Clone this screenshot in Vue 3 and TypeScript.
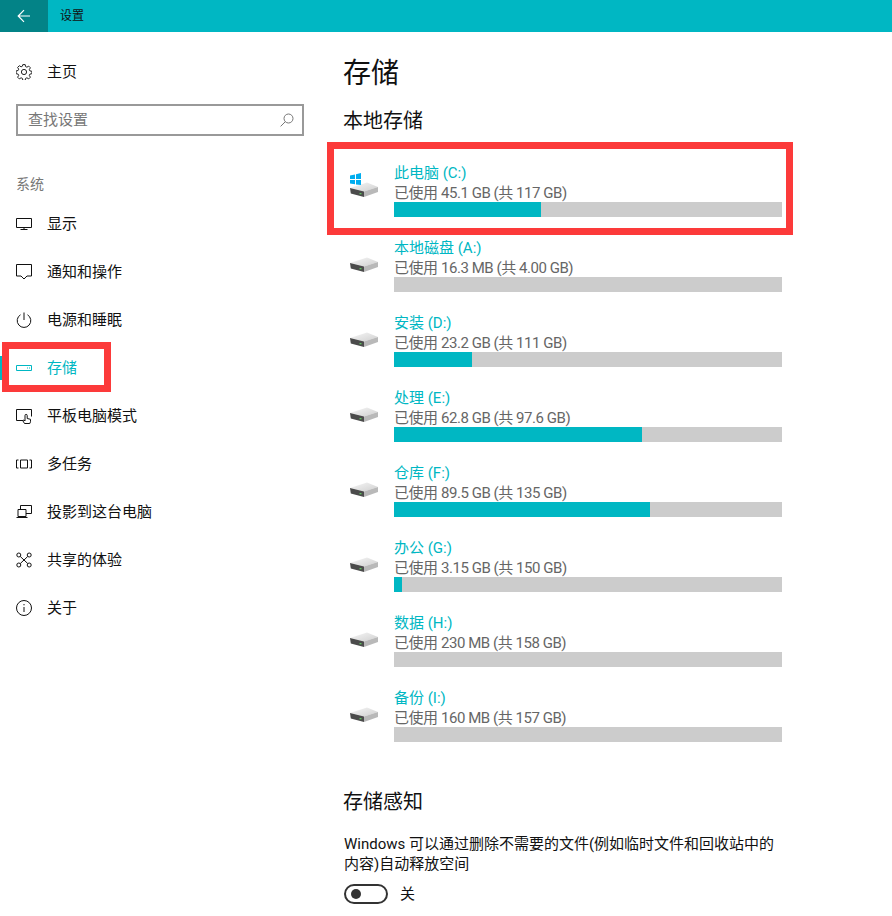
<script setup lang="ts">
interface NavItem {
  key: string
  label: string
  active?: boolean
}

interface Drive {
  name: string
  used: string
  fill: number
  system?: boolean
}

const navItems: NavItem[] = [
  { key: 'display', label: '显示' },
  { key: 'notify', label: '通知和操作' },
  { key: 'power', label: '电源和睡眠' },
  { key: 'storage', label: '存储', active: true },
  { key: 'tablet', label: '平板电脑模式' },
  { key: 'multitask', label: '多任务' },
  { key: 'project', label: '投影到这台电脑' },
  { key: 'share', label: '共享的体验' },
  { key: 'about', label: '关于' },
]

const drives: Drive[] = [
  { name: '此电脑 (C:)', used: '已使用 45.1 GB (共 117 GB)', fill: 147, system: true },
  { name: '本地磁盘 (A:)', used: '已使用 16.3 MB (共 4.00 GB)', fill: 0 },
  { name: '安装 (D:)', used: '已使用 23.2 GB (共 111 GB)', fill: 78 },
  { name: '处理 (E:)', used: '已使用 62.8 GB (共 97.6 GB)', fill: 248 },
  { name: '仓库 (F:)', used: '已使用 89.5 GB (共 135 GB)', fill: 256 },
  { name: '办公 (G:)', used: '已使用 3.15 GB (共 150 GB)', fill: 8 },
  { name: '数据 (H:)', used: '已使用 230 MB (共 158 GB)', fill: 0 },
  { name: '备份 (I:)', used: '已使用 160 MB (共 157 GB)', fill: 0 },
]
</script>

<template>
  <div class="app">
    <header class="topbar">
      <div class="back">
        <svg width="14" height="14" viewBox="0 0 14 14" fill="none" stroke="#fff" stroke-width="1.2">
          <path d="M13 7H1.5M7 1.2 1.2 7 7 12.8" />
        </svg>
      </div>
      <span class="app-title">设置</span>
    </header>

    <div class="body">
      <aside class="sidebar">
        <div class="nav-row home">
          <svg class="nav-icon" viewBox="0 0 16 16" fill="none" stroke="#222" stroke-width="1">
            <circle cx="8" cy="8" r="2.6" />
            <path d="M6.8.6h2.4l.4 2 1.3.6 1.8-1.1 1.7 1.7-1.1 1.8.6 1.3 2 .4v2.4l-2 .4-.6 1.3 1.1 1.8-1.7 1.7-1.8-1.1-1.3.6-.4 2H6.8l-.4-2-1.3-.6-1.8 1.1-1.7-1.7 1.1-1.8-.6-1.3-2-.4V6.900l2-.4.6-1.300-1.100-1.800 1.700-1.700 1.800 1.100 1.300-.6z" />
          </svg>
          <span>主页</span>
        </div>

        <div class="search">
          <span class="placeholder">查找设置</span>
          <svg width="14" height="14" viewBox="0 0 14 14" fill="none" stroke="#777" stroke-width="1">
            <circle cx="8.500" cy="5.500" r="4.500" />
            <path d="M5.300 8.700.6 13.400" />
          </svg>
        </div>

        <div class="section-label">系统</div>

        <nav class="nav">
          <div v-for="item in navItems" :key="item.key" class="nav-row" :class="{ active: item.active }">
            <svg class="nav-icon" viewBox="0 0 16 16" fill="none" stroke="currentColor" stroke-width="1">
              <template v-if="item.key === 'display'">
                <path d="M.5 2.500h15v9H.5zM8 11.500v2.500M4.500 13.500h7" />
              </template>
              <template v-else-if="item.key === 'notify'">
                <path d="M.5.500h15v11.500h-4.500L8 15l-3-3H.5z" />
              </template>
              <template v-else-if="item.key === 'power'">
                <path d="M8 .5v7.500M4.500 2.800a6.800 6.800 0 1 0 7 0" />
              </template>
              <template v-else-if="item.key === 'storage'">
                <path d="M.5 5.500h15v5H.5z" />
                <path d="M11 8h1M13 8h1" />
              </template>
              <template v-else-if="item.key === 'tablet'">
                <path d="M7 12.500H.5V1.500h15v7" />
                <path d="M8.500 15.500 6.700 12.500l1.300-.5 1 1V7.500a1.100 1.100 0 0 1 2.200 0v3l3.300.8v2.400l-.7 1.800z" />
              </template>
              <template v-else-if="item.key === 'multitask'">
                <path d="M4.500 4h7v8h-7zM2.500 4H.5v8h2M13.500 4h2v8h-2" />
              </template>
              <template v-else-if="item.key === 'project'">
                <path d="M4.500 5V1.500h11v8H10" />
                <path d="M2 5.500h8v7H2zM.5 13.500h11" />
              </template>
              <template v-else-if="item.key === 'share'">
                <circle cx="2.800" cy="3" r="2" />
                <circle cx="13.200" cy="3" r="2" />
                <circle cx="2.800" cy="13" r="2" />
                <circle cx="13.200" cy="13" r="2" />
                <path d="m4.300 4.500 7.400 7M11.700 4.500l-7.400 7" />
              </template>
              <template v-else>
                <circle cx="8" cy="8" r="7.500" />
                <path d="M8 7v5M8 4v1.300" />
              </template>
            </svg>
            <span>{{ item.label }}</span>
            <i v-if="item.active" class="nav-marker"></i>
            <i v-if="item.active" class="mark-box nav-mark"></i>
          </div>
        </nav>
      </aside>

      <main class="main">
        <h1 class="title">存储</h1>
        <h2 class="heading">本地存储</h2>

        <div class="drives">
          <div v-for="drive in drives" :key="drive.name" class="drive">
            <div class="drive-icon">
              <svg width="28" height="25" viewBox="0 0 28 25">
                <defs>
                  <linearGradient id="driveTop" x1="0" y1="0" x2="1" y2="1">
                    <stop offset="0" stop-color="#f7f7f7" />
                    <stop offset="1" stop-color="#cfcfcf" />
                  </linearGradient>
                </defs>
                <path d="M0 16 17 10.500l11 4.500-14 4.500z" fill="url(#driveTop)" />
                <path d="M0 16l14 3.500V25L.8 21.500z" fill="#4b4b4b" />
                <path d="m14 19.500 14-4.500v5L14 25z" fill="#b9b9b9" />
                <path d="M9.500 21h2v1.300h-2z" fill="#5fc25f" />
                <g v-if="drive.system" fill="#00adef">
                  <path d="M0 3.500 5 2.400v4.600H0zM6 2.200 11 1v6H6zM0 8h5v4.300L0 11.500zM6 8h5v5l-5-.6z" />
                </g>
              </svg>
            </div>
            <div class="drive-info">
              <div class="drive-name">{{ drive.name }}</div>
              <div class="drive-used">{{ drive.used }}</div>
              <div class="bar">
                <div class="bar-fill" :style="{ width: drive.fill + 'px' }"></div>
              </div>
            </div>
            <i v-if="drive.system" class="mark-box drive-mark"></i>
          </div>
        </div>

        <h2 class="heading sense">存储感知</h2>
        <p class="desc">Windows 可以通过删除不需要的文件(例如临时文件和回收站中的内容)自动释放空间</p>
        <div class="toggle-row">
          <div class="toggle"><span class="knob"></span></div>
          <span>关</span>
        </div>
      </main>
    </div>
  </div>
</template>

<style scoped>
.app {
  width: 892px;
  height: 916px;
  overflow: hidden;
  background: #fff;
  color: #111;
  font-family: Roboto, "Noto Sans CJK SC", sans-serif;
  font-size: 15px;
  line-height: 20px;
}

.topbar {
  display: flex;
  align-items: center;
  height: 32px;
  background: #00b7c3;
}

.back {
  display: flex;
  align-items: center;
  justify-content: center;
  width: 48px;
  height: 32px;
  background: #038387;
}

.app-title {
  margin-left: 12px;
  font-size: 12px;
}

.body {
  display: flex;
}

.sidebar {
  width: 344px;
  padding: 16px 40px 0 0;
  box-sizing: border-box;
}

.nav-row {
  position: relative;
  display: flex;
  align-items: center;
  gap: 15px;
  height: 48px;
  padding-left: 16px;
}

.nav-icon {
  flex: none;
  width: 16px;
  height: 16px;
}

.nav-row.active {
  color: #00b7c3;
}

.nav-marker {
  position: absolute;
  left: 0;
  top: 12px;
  width: 2px;
  height: 24px;
  background: #00b7c3;
}

.search {
  display: flex;
  align-items: center;
  justify-content: space-between;
  box-sizing: border-box;
  width: 288px;
  height: 32px;
  margin: 8px 0 0 16px;
  padding: 0 8px 0 10px;
  border: 2px solid #999;
}

.placeholder {
  color: #777;
}

.section-label {
  margin: 38px 0 6px 16px;
  color: #777;
  font-size: 14px;
}

.mark-box {
  position: absolute;
  box-sizing: border-box;
  border: 7px solid #fc3a3a;
}

.nav-mark {
  left: 2px;
  top: -2px;
  width: 109px;
  height: 50px;
}

.drive-mark {
  left: -17px;
  top: -20px;
  width: 466px;
  height: 93px;
}

.main {
  width: 438px;
  padding-top: 20px;
}

.title {
  margin: 2px 0 0 -1px;
  font-size: 28px;
  font-weight: 400;
  line-height: 40px;
}

.heading {
  margin: 13px 0 0 -1px;
  font-size: 20px;
  font-weight: 400;
  line-height: 28px;
}

.drives {
  display: flex;
  flex-direction: column;
  gap: 20px;
  margin-top: 27px;
}

.drive {
  position: relative;
  display: flex;
}

.drive-icon {
  flex: none;
  width: 44px;
  padding: 10px 0 0 6px;
  box-sizing: border-box;
}

.drive-icon svg {
  display: block;
}

.drive-info {
  width: 388px;
  margin-left: 6px;
}

.drive-name,
.drive-used {
  line-height: 18px;
  margin-top: 2px;
}

.drive-name {
  color: #00b7c3;
}

.drive-used {
  color: #666;
  letter-spacing: -0.45px;
}

.bar {
  height: 15px;
  background: #ccc;
}

.bar-fill {
  height: 100%;
  background: #00b7c3;
}

.sense {
  margin-top: 46px;
}

.desc {
  margin: 18px 0 0;
}

.toggle-row {
  display: flex;
  align-items: center;
  gap: 12px;
  margin-top: 10px;
}

.toggle {
  display: flex;
  align-items: center;
  box-sizing: border-box;
  width: 44px;
  height: 20px;
  padding-left: 5px;
  border: 2px solid #333;
  border-radius: 10px;
}

.knob {
  width: 10px;
  height: 10px;
  border-radius: 50%;
  background: #333;
}
</style>
